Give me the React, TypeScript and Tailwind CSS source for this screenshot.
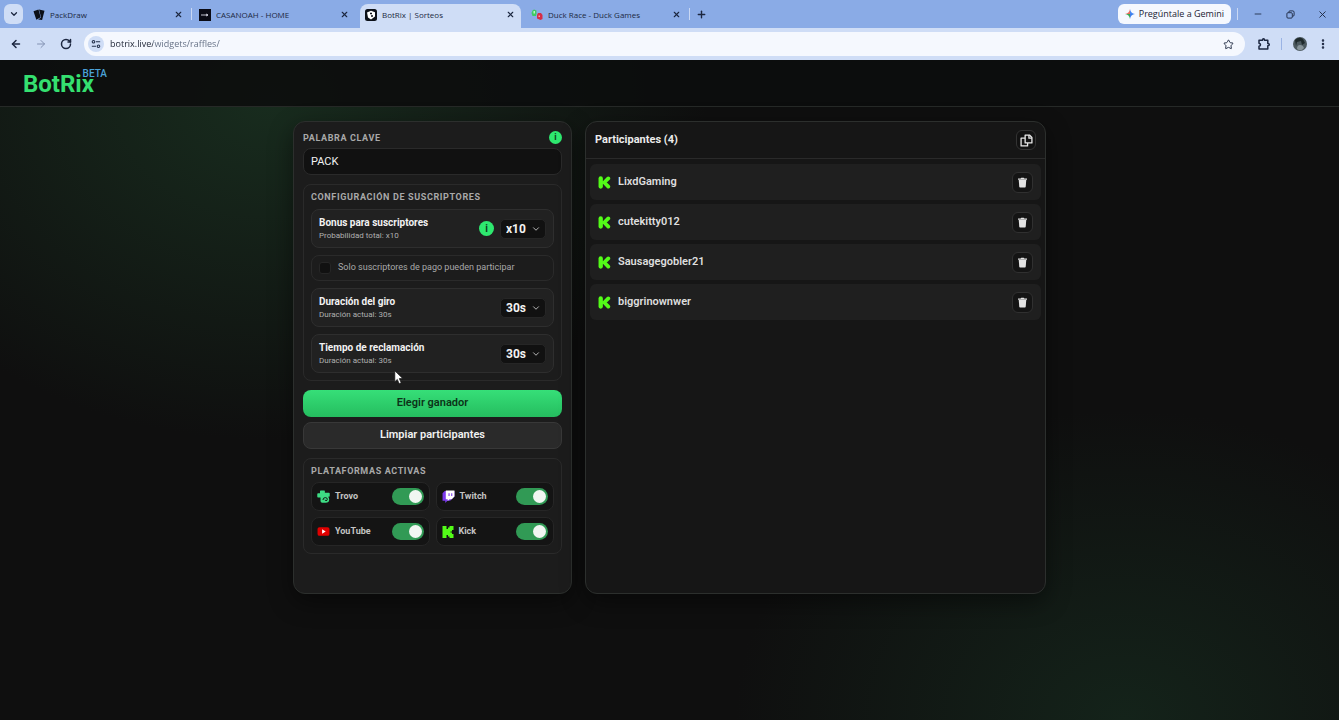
import { useState } from "react";
import type { ReactNode } from "react";
import {
  ArrowLeft,
  ArrowRight,
  ChevronDown,
  EllipsisVertical,
  Minus,
  Plus,
  RotateCw,
  Star,
  X,
} from "lucide-react";
import clsx from "clsx";

type Tab = { title: string; icon: ReactNode; active?: boolean; divider?: boolean };
type Platform = { name: string; icon: ReactNode };

const KickIcon = () => (
  <svg viewBox="0 0 24 24" className="size-3 shrink-0" fill="#53fc18">
    <path d="M1 0h8v6h3V3h3V0h8v8h-3v3h-3v2h3v3h3v8h-8v-3h-3v-3H9v6H1z" />
  </svg>
);

const KickBadge = () => (
  <svg
    viewBox="0 0 24 24"
    className="size-[13px] shrink-0"
    fill="none"
    stroke="#53fc18"
    strokeLinecap="round"
    strokeLinejoin="round"
  >
    <path strokeWidth="8" d="M5 4.500v15" />
    <path strokeWidth="7" d="M19 4.500 11.500 12l7.500 7.500" />
    <path strokeWidth="5" d="M6 12h6" />
  </svg>
);

const TrovoIcon = () => (
  <svg viewBox="0 0 24 24" className="size-[13px] shrink-0">
    <path
      fill="#3ddc84"
      d="M7 1h6.500q1 0 1 1v3H22q1.500 0 1.500 1.500V11q0 1.500-1.500 1.500h-1.500q2 2 2 5 0 6-6.500 6H9.500q-3 0-3-3v-6.500H2q-1.500 0-1.500-1.500V7.500Q.5 6 2 6h3.500V2.500Q5.500 1 7 1z"
    />
    <path
      fill="none"
      stroke="#141414"
      strokeWidth="1.800"
      d="M11 18.500q0-4.500 4.500-4.500 3.500 0 3.500 3.200 0 2.500-2.300 2.500-1.700 0-1.700-1.700"
    />
  </svg>
);

const TwitchIcon = () => (
  <svg viewBox="0 0 24 24" className="size-[13px] shrink-0">
    <path fill="#7c3aed" d="M5 2 1 6v14h5v4l4-4h5l8-8V2z" />
    <path fill="#fff" d="M7 1h16v11l-5 5h-4l-3.500 3.500V17H7z" />
    <path fill="#7c3aed" d="M12 6h2v5h-2zM17 6h2v5h-2z" />
  </svg>
);

const YouTubeIcon = () => (
  <svg viewBox="0 0 24 24" className="size-[13px] shrink-0">
    <rect x="1" y="4" width="22" height="16" rx="3.500" fill="#e00000" />
    <path d="m9.500 8 6.500 4-6.500 4z" fill="#fff" />
  </svg>
);

const TrashIcon = () => (
  <svg viewBox="0 0 12 14" className="h-[11px] w-[9px]" fill="#e3e3e3">
    <path d="M0 1.500h3.500L4.300.5h3.400l.8 1H12v1.700H0z" />
    <path d="M1 3.600h10l-.7 8.900q-.1 1-1.100 1H2.800q-1 0-1.100-1z" />
  </svg>
);

const CopyIcon = () => (
  <svg viewBox="0 0 24 24" className="size-[13px]" fill="none" stroke="#e8e8e8" strokeWidth="2.400">
    <path d="M9.500 2h8L22 6.500v10H9.500z" strokeLinejoin="round" />
    <path d="M16.500 2v5.500H22" />
    <path d="M9.500 7.500H2V22h12v-5.500" strokeLinejoin="round" />
  </svg>
);

const CardsIcon = () => (
  <svg viewBox="0 0 12 12" className="size-3 shrink-0" fill="#0b0f18">
    <path d="m.5 2.200 5-1.700 2.200 7.800-4.400 2.500z" />
    <path d="m6 .5 5.500 1.200-2.400 9.300-4-.6 3-2z" />
  </svg>
);

const CasaIcon = () => (
  <svg viewBox="0 0 12 12" className="size-3 shrink-0">
    <rect width="12" height="12" fill="#0b0b14" />
    <path d="M2 6h7M7 5l2 1-2 1" stroke="#d8d8e4" fill="none" strokeWidth=".9" />
  </svg>
);

const BotIcon = () => (
  <svg viewBox="0 0 12 12" className="size-3 shrink-0">
    <rect width="12" height="12" rx="2.500" fill="#0c1018" />
    <path d="m2 3.500 4-1.700 4 1.500v4.200L6 10.500l-3-2z" fill="#fff" />
    <path d="M5 3.800h2v1.500H5zM6 6.300h2v1.500H6z" fill="#0c1018" />
  </svg>
);

const DuckIcon = () => (
  <svg viewBox="0 0 12 12" className="size-3 shrink-0">
    <path d="M1.500 1.500 3 .5l2.500 1v3L5 7H1.500L.5 4z" fill="#3fca62" />
    <path d="M2.500 2h1.500v2.500H2.500z" fill="#b9f5c6" />
    <path d="M7 4h3l1.500 2v4L9.500 11 6 9.500V6z" fill="#d62c46" />
    <path d="M7.500 6.500H9V8H7.500z" fill="#ff9aa6" />
  </svg>
);

const GeminiIcon = () => (
  <svg viewBox="0 0 12 12" className="size-[10px]">
    <path d="M6 0q.8 5.200 6 6H6z" fill="#4285f4" />
    <path d="M6 0q-.8 5.200-6 6h6z" fill="#ea6a5a" />
    <path d="M0 6q5.200.8 6 6V6z" fill="#34a853" />
    <path d="M12 6q-5.200.8-6 6V6z" fill="#3b7de9" />
  </svg>
);

const SiteInfoIcon = () => (
  <svg viewBox="0 0 12 12" className="size-[10px]" fill="none" stroke="#25324d" strokeWidth="1.300">
    <circle cx="3" cy="3.300" r="1.500" />
    <path d="M6 3.300h5M1 8.700h5" />
    <circle cx="9" cy="8.700" r="1.500" />
  </svg>
);

const PuzzleIcon = () => (
  <svg viewBox="0 0 14 14" className="size-[14px]" fill="none" stroke="#1c2740" strokeWidth="1.500">
    <path
      strokeLinejoin="round"
      d="M2 3.200h3.500q0-1.400 1-1.400t1 1.400h3.300v3.200q1.500 0 1.500 1.200t-1.500 1.200V12H2V9.200q1.500-.2 1.500-1.400T2 6.300z"
    />
  </svg>
);

const RestoreIcon = () => (
  <svg viewBox="0 0 10 10" className="size-[9px]" fill="none" stroke="#1c2740">
    <rect x="1" y="3" width="6" height="6" rx="1.200" />
    <path d="M3 2.500Q3 1 4.500 1h3Q9 1 9 2.500v3Q9 7 7.500 7" />
  </svg>
);

const TABS: Tab[] = [
  { title: "PackDraw", icon: <CardsIcon />, divider: true },
  { title: "CASANOAH - HOME", icon: <CasaIcon /> },
  { title: "BotRix | Sorteos", icon: <BotIcon />, active: true },
  { title: "Duck Race - Duck Games", icon: <DuckIcon />, divider: true },
];

const PLATFORMS: Platform[] = [
  { name: "Trovo", icon: <TrovoIcon /> },
  { name: "Twitch", icon: <TwitchIcon /> },
  { name: "YouTube", icon: <YouTubeIcon /> },
  { name: "Kick", icon: <KickIcon /> },
];

const USERS: string[] = ["LixdGaming", "cutekitty012", "Sausagegobler21", "biggrinownwer"];

const BrowserTab = ({ title, icon, active, divider }: Tab) => (
  <div
    className={clsx(
      "relative flex h-6 w-[161px] items-center gap-[5px] rounded-t-lg pb-[3px] pl-[5px] pr-[6px]",
      active && "bg-[#cfddf6]"
    )}
  >
    {icon}
    <span className="flex-1 truncate text-[8px] leading-3 text-[#1c2942]">{title}</span>
    <button type="button" aria-label={`Cerrar ${title}`}>
      <X size={9} strokeWidth={3} className="text-[#1c2740]" />
    </button>
    {divider && <span className="absolute -right-[3px] top-1 h-3 w-px bg-[#c9d8f4]" />}
  </div>
);

const Browser = () => (
  <div className="bg-[#cfddf6] font-['Open_Sans',sans-serif]">
    <div className="flex h-7 items-end bg-[#8aabe6]">
      <button
        type="button"
        aria-label="Buscar pestañas"
        className="mb-1 ml-1 mr-[5px] flex h-5 w-[19px] items-center justify-center rounded-md bg-[#cfddf6]"
      >
        <ChevronDown size={10} strokeWidth={3} className="text-[#1c2740]" />
      </button>
      <div className="flex gap-[5px]">
        {TABS.map((tab) => (
          <BrowserTab key={tab.title} {...tab} />
        ))}
      </div>
      <button type="button" aria-label="Nueva pestaña" className="ml-[9px] flex h-7 items-center">
        <Plus size={11} strokeWidth={3} className="text-[#1c2740]" />
      </button>
      <div className="ml-auto flex h-7 items-center">
        <button
          type="button"
          className="flex h-5 items-center gap-1 rounded-md bg-[#f5f8fe] px-[7px] text-[9px] font-medium text-[#1b2233]"
        >
          <GeminiIcon />
          Pregúntale a Gemini
        </button>
        <span className="ml-[6px] h-3 w-px bg-[#c9d8f4]" />
        <div className="flex text-[#1c2740]">
          <button type="button" aria-label="Minimizar" className="flex w-8 justify-center pl-2">
            <Minus size={10} strokeWidth={2} />
          </button>
          <button type="button" aria-label="Restaurar" className="flex w-8 items-center justify-center pl-2">
            <RestoreIcon />
          </button>
          <button type="button" aria-label="Cerrar" className="mr-[5px] flex w-8 justify-center pl-2">
            <X size={11} strokeWidth={2} />
          </button>
        </div>
      </div>
    </div>
    <div className="flex h-8 items-center px-[10px] text-[#1c2740]">
      <div className="flex gap-[13px]">
        <button type="button" aria-label="Atrás">
          <ArrowLeft size={12} strokeWidth={3} />
        </button>
        <button type="button" aria-label="Adelante">
          <ArrowRight size={12} strokeWidth={2} className="text-[#8392b3]" />
        </button>
        <button type="button" aria-label="Recargar">
          <RotateCw size={12} strokeWidth={3} />
        </button>
      </div>
      <div className="ml-3 flex h-6 flex-1 items-center rounded-full bg-[#f5f8fe] pl-1 pr-[11px]">
        <span className="flex size-4 items-center justify-center rounded-full bg-[#cfddf6]">
          <SiteInfoIcon />
        </span>
        {/* the host is drawn darker than the path */}
        <input
          aria-label="Dirección"
          defaultValue="botrix.live/widgets/raffles/"
          className="ml-[6px] flex-1 bg-[linear-gradient(90deg,#1b2233_43px,#5f6b80_43px)] bg-clip-text text-[9px] leading-4 text-transparent outline-none"
        />
        <button type="button" aria-label="Añadir a marcadores">
          <Star size={11} strokeWidth={2} />
        </button>
      </div>
      <button type="button" aria-label="Extensiones" className="ml-3">
        <PuzzleIcon />
      </button>
      <span className="ml-[10px] h-3 w-px bg-[#9ab3e4]" />
      <button type="button" aria-label="Perfil" className="ml-[11px]">
        <svg viewBox="0 0 14 14" className="size-[14px]">
          <circle cx="7" cy="7" r="7" fill="#4d5a60" />
          <path d="M2 3q4-4 8-1l2 4-3 2-1-4-4 1-1 4z" fill="#1f2a2c" />
          <path d="M4 12q0-4 3-4t4 3q-3 4-7 1z" fill="#87949a" />
        </svg>
      </button>
      <button type="button" aria-label="Menú" className="ml-[10px]">
        <EllipsisVertical size={12} strokeWidth={3} />
      </button>
    </div>
  </div>
);

const SectionTitle = ({ children }: { children: ReactNode }) => (
  <h2 className="text-[9px] font-bold uppercase leading-[10px] tracking-[0.07em] text-[#a9a9a9]">
    {children}
  </h2>
);

const InfoDot = ({ large }: { large?: boolean }) => (
  <button
    type="button"
    aria-label="Información"
    className={clsx(
      "flex items-center justify-center rounded-full bg-[#2ee86f] font-bold text-[#0d3b1e]",
      large ? "size-[15px] text-[10px]" : "size-[13px] text-[9px]"
    )}
  >
    i
  </button>
);

type SettingProps = {
  id: string;
  title: string;
  hint: string;
  options: string[];
  value: string;
  onChange: (value: string) => void;
  info?: boolean;
};

const Setting = ({ id, title, hint, options, value, onChange, info }: SettingProps) => (
  <div className="flex h-[39px] items-center rounded-lg border border-[#2e2e2e] bg-[#212121] px-[7px]">
    <div className="flex flex-1 flex-col">
      <label htmlFor={id} className="text-[10px] font-bold leading-[14px] text-[#f2f2f2]">
        {title}
      </label>
      <span className="text-[8px] leading-3 text-[#b0b0b0]">{hint}</span>
    </div>
    {info && <InfoDot large />}
    <div className="relative ml-[6px]">
      <select
        id={id}
        value={value}
        onChange={(e) => onChange(e.target.value)}
        className="block h-5 w-[46px] appearance-none rounded-[5px] border border-[#262626] bg-[#111] pl-[5px] text-xs font-bold leading-[18px] text-[#f2f2f2]"
      >
        {options.map((option) => (
          <option key={option}>{option}</option>
        ))}
      </select>
      <ChevronDown
        size={10}
        strokeWidth={2}
        className="pointer-events-none absolute right-[5px] top-[5px] text-[#d4d4d4]"
      />
    </div>
  </div>
);

const Controls = () => {
  const [keyword, setKeyword] = useState<string>("PACK");
  const [bonus, setBonus] = useState<string>("x10");
  const [spin, setSpin] = useState<string>("30s");
  const [claim, setClaim] = useState<string>("30s");

  return (
    <section className="flex flex-col rounded-xl border border-[#2c2f2d] bg-[#1c1c1c] px-[9px] pb-9 pt-[9px] shadow-[0_8px_24px_rgba(0,0,0,0.45)]">
      <div className="flex h-[13px] items-center justify-between">
        <label
          htmlFor="keyword"
          className="text-[9px] font-bold uppercase leading-3 tracking-[0.07em] text-[#a9a9a9]"
        >
          Palabra clave
        </label>
        <InfoDot />
      </div>
      <input
        id="keyword"
        value={keyword}
        onChange={(e) => setKeyword(e.target.value)}
        className="mt-1 h-[27px] w-full rounded-lg border border-[#2a2a2a] bg-[#111] px-[7px] text-[11px] text-[#f2f2f2] outline-none"
      />

      <div className="mt-[9px] flex flex-col gap-[7px] rounded-lg border border-[#2a2a2a] p-[7px]">
        <SectionTitle>Configuración de suscriptores</SectionTitle>
        <Setting
          id="bonus"
          title="Bonus para suscriptores"
          hint={`Probabilidad total: ${bonus}`}
          options={["x1", "x2", "x5", "x10"]}
          value={bonus}
          onChange={setBonus}
          info
        />
        <label className="flex h-[26px] items-center gap-[7px] rounded-lg border border-[#2a2a2a] px-[7px] text-[9px] text-[#a9a9a9]">
          <input
            type="checkbox"
            className="size-3 appearance-none rounded-[3px] border border-[#262626] bg-[#111] checked:bg-[#2ee86f]"
          />
          Solo suscriptores de pago pueden participar
        </label>
        <Setting
          id="spin"
          title="Duración del giro"
          hint={`Duración actual: ${spin}`}
          options={["10s", "20s", "30s"]}
          value={spin}
          onChange={setSpin}
        />
        <Setting
          id="claim"
          title="Tiempo de reclamación"
          hint={`Duración actual: ${claim}`}
          options={["15s", "30s", "60s"]}
          value={claim}
          onChange={setClaim}
        />
      </div>

      <button
        type="button"
        className="mt-[9px] h-[27px] rounded-lg bg-gradient-to-b from-[#36df78] to-[#25bd5f] text-[11px] font-semibold text-[#0c3318]"
      >
        Elegir ganador
      </button>
      <button
        type="button"
        className="mt-[5px] h-[27px] rounded-lg border border-[#383838] bg-[#2a2a2a] text-[11px] font-semibold text-[#f2f2f2]"
      >
        Limpiar participantes
      </button>

      <div className="mt-[9px] flex flex-col gap-[6px] rounded-lg border border-[#2a2a2a] p-[7px]">
        <SectionTitle>Plataformas activas</SectionTitle>
        <div className="grid grid-cols-2 gap-[6px]">
          {PLATFORMS.map(({ name, icon }: Platform) => (
            <label
              key={name}
              className="flex h-[29px] items-center gap-[5px] rounded-lg border border-[#262626] bg-[#141414] px-[5px] text-[9px] font-bold text-[#c4c4c4]"
            >
              {icon}
              <span className="flex-1">{name}</span>
              <input
                type="checkbox"
                role="switch"
                defaultChecked
                className="flex h-[17px] w-8 appearance-none items-center rounded-full bg-[#444] px-[2px] before:size-[13px] before:rounded-full before:bg-[#f1f6f2] checked:justify-end checked:bg-[#319a55]"
              />
            </label>
          ))}
        </div>
      </div>
    </section>
  );
};

const Participants = () => {
  const [users, setUsers] = useState<string[]>(USERS);

  return (
    <section className="rounded-xl border border-[#2c2f2d] bg-[#161616] shadow-[0_8px_24px_rgba(0,0,0,0.45)]">
      <div className="flex h-[37px] items-center justify-between border-b border-[#2a2a2a] px-[9px]">
        <h2 className="text-[11px] font-bold text-[#ececec]">Participantes ({users.length})</h2>
        <button
          type="button"
          aria-label="Copiar participantes"
          className="flex size-5 items-center justify-center rounded-md border border-[#333] bg-[#121212]"
        >
          <CopyIcon />
        </button>
      </div>
      <ul className="flex flex-col gap-1 px-1 pt-[5px]">
        {users.map((user: string) => (
          <li key={user} className="flex h-9 items-center rounded-md bg-[#1f1f1f] px-2">
            <KickBadge />
            <span className="ml-[7px] flex-1 text-[11px] font-semibold text-[#dedede]">{user}</span>
            <button
              type="button"
              aria-label={`Eliminar ${user}`}
              onClick={() => setUsers(users.filter((u) => u !== user))}
              className="flex size-[21px] items-center justify-center rounded-md border border-[#303030] bg-[#141414]"
            >
              <TrashIcon />
            </button>
          </li>
        ))}
      </ul>
    </section>
  );
};

const App = () => (
  <div className="relative flex min-h-screen flex-col bg-[#0f0f0f] font-[Roboto,sans-serif]">
    <Browser />
    <div className="flex flex-1 flex-col bg-[radial-gradient(ellipse_440px_340px_at_20%_40px,#182c1e_0%,transparent_100%),radial-gradient(ellipse_390px_310px_at_84%_100%,#14231a_0%,transparent_100%)]">
      <header className="flex h-[47px] items-center border-b border-[#262927] bg-[#0c0d0d]/90 px-[23px]">
        <a href="/" className="relative pt-[2px] text-2xl font-bold leading-7 text-[#35e070]">
          BotRix
          <span className="absolute -right-[13px] top-0 text-[10px] font-medium leading-3 text-[#4ba3d9]">
            BETA
          </span>
        </a>
      </header>
      <main className="mx-auto mt-[14px] grid min-h-[473px] w-full max-w-[753px] grid-cols-[279px_1fr] gap-[13px]">
        <Controls />
        <Participants />
      </main>
    </div>
    <svg viewBox="0 0 10 15" className="absolute left-[394px] top-[370px] h-[15px] w-[10px]">
      <path
        d="M.8.8v11l2.500-2.400 1.900 4.300 2-.9-1.900-4.200h3.500z"
        fill="#fff"
        stroke="#111"
        strokeWidth=".7"
      />
    </svg>
  </div>
);

export default App;
